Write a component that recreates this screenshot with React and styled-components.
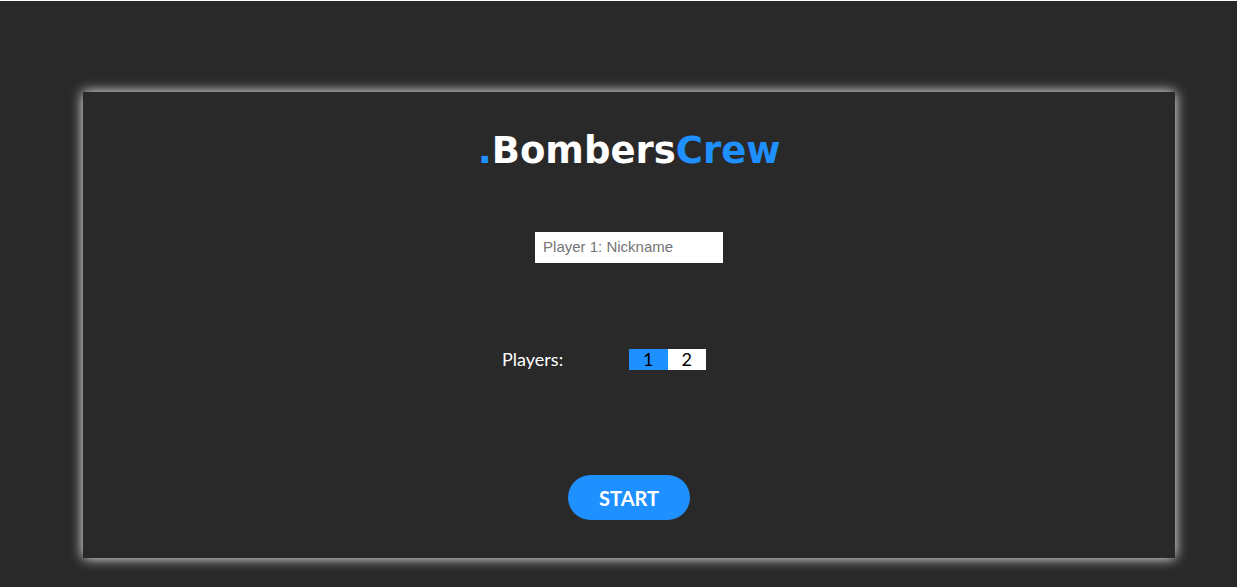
import React, { useState } from "react";
import styled, { createGlobalStyle } from "styled-components";

const GlobalStyle = createGlobalStyle`
  *, *::before, *::after { box-sizing: border-box; }
  body {
    margin: 0;
    background: #292929;
    color: #fff;
    font-family: Lato, "Liberation Sans", sans-serif;
  }
`;

const Page = styled.div`
  min-height: 100vh;
  border-top: 1px solid #fff;
  padding: 91px 5% 29px 83px;
`;

const Card = styled.form`
  display: flex;
  flex-direction: column;
  align-items: center;
  padding: 35px 24px 38px;
  background: #292929;
  box-shadow: 0 0 12px #fff;
`;

const Title = styled.h1`
  margin: 0 0 57px;
  font: bold 37px/48px "DejaVu Sans", sans-serif;
`;

const Accent = styled.span`
  color: #1e90ff;
`;

const NameInput = styled.input`
  width: 188px;
  height: 31px;
  padding: 0 8px 2px;
  border: 0;
  border-radius: 0;
  background: #fff;
  color: #000;
  font: 15px "Liberation Sans", Arial, sans-serif;
  &::placeholder { color: #757575; }
`;

const PlayersRow = styled.fieldset`
  display: grid;
  grid-template-columns: 1fr 1fr;
  width: 254px;
  margin: 86px 0 105px;
  padding: 0;
  border: 0;
  font-size: 18px;
  line-height: 21px;
`;

const Options = styled.div`
  display: flex;
`;

const Option = styled.label`
  position: relative;
  padding: 0 14px;
  background: ${(p) => (p.$active ? "#1e90ff" : "#fff")};
  color: #000;
  cursor: pointer;
`;

const Radio = styled.input`
  position: absolute;
  inset: 0;
  width: 100%;
  height: 100%;
  margin: 0;
  opacity: 0;
  cursor: pointer;
`;

const StartButton = styled.button`
  width: 122px;
  height: 45px;
  padding: 0;
  border: 0;
  border-radius: 23px;
  background: #1e90ff;
  color: #fff;
  font: bold 20px Lato, sans-serif;
  cursor: pointer;
`;

export default function App() {
  const [players, setPlayers] = useState(1);
  return (
    <>
      <GlobalStyle />
      <Page>
        <Card onSubmit={(e) => e.preventDefault()}>
          <Title>
            <Accent>.</Accent>Bombers<Accent>Crew</Accent>
          </Title>
          <NameInput type="text" placeholder="Player 1: Nickname" aria-label="Player 1: Nickname" />
          <PlayersRow aria-labelledby="players-label">
            <span id="players-label">Players:</span>
            <Options>
              {[1, 2].map((n) => (
                <Option key={n} $active={players === n}>
                  <Radio
                    type="radio"
                    name="players"
                    value={n}
                    checked={players === n}
                    onChange={() => setPlayers(n)}
                  />
                  {n}
                </Option>
              ))}
            </Options>
          </PlayersRow>
          <StartButton type="submit">START</StartButton>
        </Card>
      </Page>
    </>
  );
}
